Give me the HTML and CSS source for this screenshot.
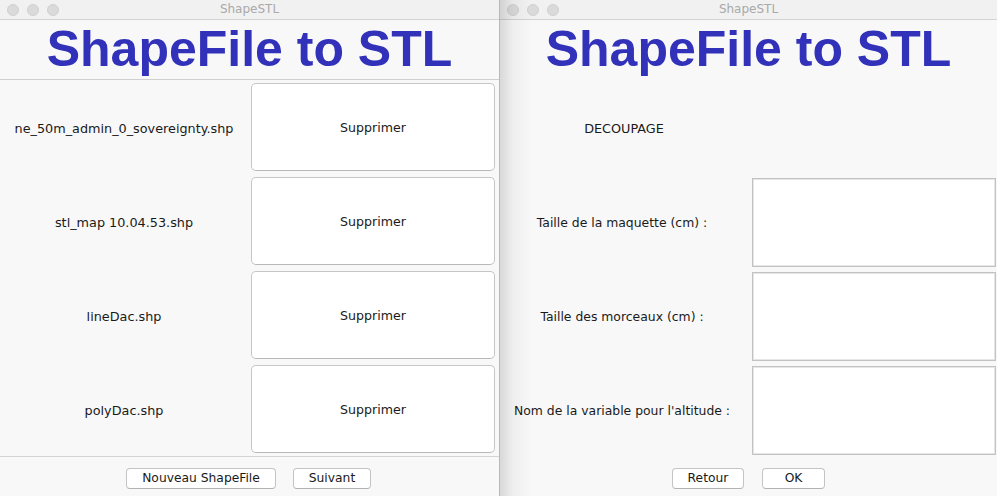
FILE: index.html
```html
<!DOCTYPE html>
<html lang="fr">
<head>
<meta charset="utf-8">
<title>ShapeSTL</title>
<link rel="stylesheet" href="styles.css">
</head>
<body>
<div class="desktop">
  <section class="window window-left">
    <header class="titlebar">
      <div class="lights"><span class="light"></span><span class="light"></span><span class="light"></span></div>
      <div class="wtitle">ShapeSTL</div>
    </header>
    <div class="content">
      <h1 class="heading">ShapeFile to STL</h1>
      <div class="list">
        <div class="label">ne_50m_admin_0_sovereignty.shp</div>
        <button class="bigbtn">Supprimer</button>
        <div class="label">stl_map 10.04.53.shp</div>
        <button class="bigbtn">Supprimer</button>
        <div class="label">lineDac.shp</div>
        <button class="bigbtn">Supprimer</button>
        <div class="label">polyDac.shp</div>
        <button class="bigbtn">Supprimer</button>
      </div>
      <footer class="bottombar bottombar-sep">
        <button class="btn btn-new">Nouveau ShapeFile</button>
        <button class="btn btn-next">Suivant</button>
      </footer>
    </div>
  </section>
  <section class="window window-right">
    <header class="titlebar">
      <div class="lights"><span class="light"></span><span class="light"></span><span class="light"></span></div>
      <div class="wtitle">ShapeSTL</div>
    </header>
    <div class="content">
      <h1 class="heading heading-plain">ShapeFile to STL</h1>
      <div class="form">
        <div class="label">DECOUPAGE</div>
        <div class="empty"></div>
        <div class="label label-sm">Taille de la maquette (cm) :</div>
        <div class="field"></div>
        <div class="label label-sm">Taille des morceaux (cm) :</div>
        <div class="field"></div>
        <div class="label label-sm">Nom de la variable pour l'altitude :</div>
        <div class="field"></div>
      </div>
      <footer class="bottombar">
        <button class="btn btn-back">Retour</button>
        <button class="btn btn-ok">OK</button>
      </footer>
    </div>
    <div class="shade"></div>
  </section>
</div>
</body>
</html>
```
FILE: styles.css
```css
* { box-sizing: border-box; }
html, body { margin: 0; padding: 0; }
body {
  width: 997px;
  height: 496px;
  overflow: hidden;
  background: #f8f8f8;
  font-family: "DejaVu Sans", "Liberation Sans", sans-serif;
  font-size: 12.8px;
  color: #1a1a1a;
}
.desktop {
  display: flex;
  height: 496px;
}
.window {
  position: relative;
  display: flex;
  flex-direction: column;
  height: 496px;
  background: #f8f8f8;
}
.window-left {
  width: 500px;
  border-right: 1px solid #b9b9b9;
}
.window-right {
  width: 497px;
}
.titlebar {
  position: relative;
  height: 20px;
  background: #f1f1f1;
  border-bottom: 1px solid #d2d2d2;
  display: flex;
  align-items: center;
  justify-content: center;
}
.lights {
  position: absolute;
  left: 7px;
  top: 4px;
  display: flex;
  gap: 8px;
}
.light {
  width: 12px;
  height: 12px;
  border-radius: 50%;
  background: #dadada;
  border: 1px solid #d0d0d0;
}
.wtitle {
  font-family: "DejaVu Sans", sans-serif;
  font-size: 12px;
  color: #a9a9a9;
  line-height: 19px;
  margin-top: -1px;
}
.content {
  flex: 1;
  display: flex;
  flex-direction: column;
}
.heading {
  margin: 0;
  height: 60px;
  font-family: "Liberation Sans", Arial, sans-serif;
  font-weight: bold;
  font-size: 50px;
  line-height: 58px;
  color: #3131b9;
  text-align: center;
  border-bottom: 1px solid #cfcfcf;
}
.heading-plain {
  border-bottom-color: transparent;
}
.list {
  display: grid;
  grid-template-columns: 1fr 244px;
  grid-auto-rows: 94px;
  column-gap: 3px;
  padding-right: 4px;
  align-items: center;
}
.label {
  text-align: center;
  white-space: nowrap;
  padding-top: 2px;
}
.label-sm {
  font-size: 12.4px;
}
.bigbtn {
  height: 88px;
  width: 244px;
  background: #ffffff;
  border: 1px solid #c6c6c6;
  border-bottom-color: #b8b8b8;
  border-radius: 5px;
  font-family: "DejaVu Sans", sans-serif;
  font-size: 12.6px;
  color: #1a1a1a;
  padding: 0;
  margin: 0;
}
.bottombar {
  flex: 1;
  display: flex;
  justify-content: center;
  align-items: flex-start;
  padding-top: 11px;
  gap: 17px;
}
.bottombar-sep {
  border-top: 1px solid #d4d4d4;
}
.btn {
  height: 21px;
  background: #ffffff;
  border: 1px solid #c4c4c4;
  border-bottom-color: #b2b2b2;
  border-radius: 4px;
  font-family: "DejaVu Sans", sans-serif;
  font-size: 12.3px;
  color: #1a1a1a;
  padding: 0;
  margin: 0;
  line-height: 19px;
}
.btn-new { width: 150px; margin-left: -2px; }
.btn-next { width: 78px; }
.btn-back { width: 72px; margin-top: 1px; }
.btn-ok { width: 63px; margin-top: 1px; }
.window-right .bottombar { padding-top: 10px; gap: 18px; }
.form {
  display: grid;
  grid-template-columns: 244px 244px;
  grid-auto-rows: 94px;
  column-gap: 8px;
  align-items: center;
  padding-bottom: 1px;
}
.form .label:first-child { padding-left: 4px; }
.field {
  height: 89px;
  margin-top: 3px;
  background: #ffffff;
  border: 1px solid #c2c2c2;
  box-shadow: inset 0 0 0 1px #e6e6e6;
}
.shade {
  position: absolute;
  left: 0;
  top: 0;
  width: 32px;
  height: 496px;
  background: linear-gradient(to right, rgba(0,0,0,0.13), rgba(0,0,0,0.04) 40%, rgba(0,0,0,0));
  pointer-events: none;
}
```
